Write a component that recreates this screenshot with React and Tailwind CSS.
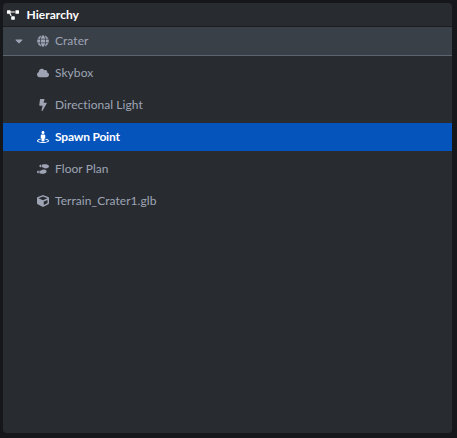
import { FaProjectDiagram, FaGlobe, FaCloud, FaBolt, FaStreetView, FaShoePrints, FaCube, FaCaretDown } from "react-icons/fa";

const nodes = [
  { name: "Skybox", Icon: FaCloud },
  { name: "Directional Light", Icon: FaBolt },
  { name: "Spawn Point", Icon: FaStreetView, selected: true },
  { name: "Floor Plan", Icon: FaShoePrints },
  { name: "Terrain_Crater1.glb", Icon: FaCube },
];

function Node({ name, Icon, selected }) {
  return (
    <li
      className={`flex h-7 items-center gap-1.5 pl-[34px] ${
        selected ? "bg-[#0554bc] font-bold tracking-[-0.2px] text-white" : "tracking-[0.06px] text-[#9fa4b5]"
      }`}
    >
      <Icon className="size-3 shrink-0" />
      <span>{name}</span>
    </li>
  );
}

export default function App() {
  return (
    <div className="flex h-screen flex-col bg-[#15171b] pt-[3px] pr-[5px] pb-[5px] pl-[3px] font-['Lato',sans-serif] text-xs">
      <section className="flex flex-1 flex-col overflow-hidden rounded bg-[#282c31]">
        <header className="flex h-6 shrink-0 items-center gap-[7.5px] border-b border-[#1b1d21] pl-1 font-bold tracking-[0.04px] text-white">
          <FaProjectDiagram className="size-3" />
          <h1>Hierarchy</h1>
        </header>
        <div className="flex h-[29px] shrink-0 items-center border-b border-[#5d646f] bg-[#3a4048] pl-2.5 tracking-[0.06px] text-[#9fa4b5]">
          <FaCaretDown className="mr-2 h-3 w-4 pr-1" />
          <FaGlobe className="mr-1.5 size-3" />
          <span>Crater</span>
        </div>
        <ul className="flex flex-col gap-1 pt-[3px]">
          {nodes.map((node) => (
            <Node key={node.name} {...node} />
          ))}
        </ul>
      </section>
    </div>
  );
}
